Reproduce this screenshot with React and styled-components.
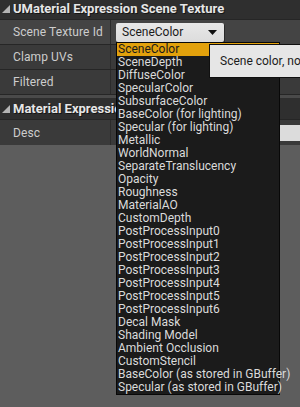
import React from 'react';
import styled, { createGlobalStyle } from 'styled-components';

const GlobalStyle = createGlobalStyle`
    html, body {
        margin: 0;
        padding: 0;
        background: #5d5d5d;
        overflow: hidden;
    }
    body {
        width: 300px;
        height: 407px;
        font-family: Roboto, "Liberation Sans", sans-serif;
    }
`;

const Panel = styled.div`
    display: flex;
    flex-direction: column;
    gap: 1px;
    background: #262626;
    margin-top: -2px;
`;

const Category = styled.div`
    height: 21px;
    display: flex;
    align-items: center;
    gap: 3px;
    padding-left: 2px;
    background: #2f2f2f;
    color: #e6e6e6;
    font-size: 13px;
    font-weight: bold;
    white-space: nowrap;
    text-shadow: 1px 1px 0 #151515;
    margin-top: ${({ spaced }) => (spaced ? '3px' : '0')};
    box-shadow: ${({ spaced }) => (spaced ? '0 -3px 0 #4a4a4a' : 'none')};
`;

const Row = styled.div`
    display: flex;
    height: ${({ tall }) => (tall ? '25px' : '24px')};
    background: ${({ hovered }) => (hovered ? '#444444' : '#3a3a3a')};
`;

const Label = styled.div`
    width: 111px;
    flex: none;
    display: flex;
    align-items: center;
    padding-left: 13px;
    box-sizing: border-box;
    color: #cdcdcd;
    font-size: 12px;
    letter-spacing: 0.1px;
    border-right: 1px solid #2b2b2b;
`;

const Value = styled.div`
    flex: 1;
    display: flex;
    align-items: center;
    padding-left: 5px;
    position: relative;
`;

const Combo = styled.div`
    position: relative;
    width: 108px;
    height: 19px;
    box-sizing: border-box;
    display: flex;
    align-items: center;
    justify-content: space-between;
    padding: 0 7px 0 6px;
    background: linear-gradient(#e8e8e8, #dcdcdc);
    border-radius: 2px;
    color: #1a1a1a;
    font-size: 12px;
    box-shadow: 1px 1px 0 #2a2a2a;
`;

const TextBox = styled.div`
    flex: 1;
    height: 16px;
    background: #dcdcdc;
    border-radius: 2px 0 0 2px;
`;

const Menu = styled.ul`
    position: absolute;
    top: 19px;
    left: 0;
    width: 164px;
    margin: 0;
    padding: 0;
    list-style: none;
    background: #1b1b1b;
    border: 1px solid #080808;
    box-sizing: border-box;
    z-index: 2;
`;

const Item = styled.li`
    height: 13px;
    line-height: 13px;
    padding-left: 1px;
    font-size: 12px;
    white-space: nowrap;
    color: ${({ selected }) => (selected ? '#1a1a1a' : '#dadada')};
    background: ${({ selected }) => (selected ? '#e2a10c' : 'transparent')};
`;

const Tooltip = styled.div`
    position: absolute;
    top: 1px;
    left: 92px;
    height: 34px;
    box-sizing: border-box;
    display: flex;
    align-items: center;
    padding: 0 10px;
    background: #e6e6e6;
    border: 1px solid #101010;
    color: #1c1c1c;
    font-size: 12px;
    white-space: nowrap;
    z-index: 3;
`;

const Arrow = () => (
    <svg width="8" height="8" viewBox="0 0 6 6">
        <polygon points="6,0 6,6 0,6" fill="#b4b4b4" />
    </svg>
);

const ComboArrow = () => (
    <svg width="9" height="5" viewBox="0 0 9 5">
        <polygon points="0,0 9,0 4.5,5" fill="#111" />
    </svg>
);

const options = [
    'SceneColor', 'SceneDepth', 'DiffuseColor', 'SpecularColor', 'SubsurfaceColor',
    'BaseColor (for lighting)', 'Specular (for lighting)', 'Metallic', 'WorldNormal',
    'SeparateTranslucency', 'Opacity', 'Roughness', 'MaterialAO', 'CustomDepth',
    'PostProcessInput0', 'PostProcessInput1', 'PostProcessInput2', 'PostProcessInput3',
    'PostProcessInput4', 'PostProcessInput5', 'PostProcessInput6', 'Decal Mask',
    'Shading Model', 'Ambient Occlusion', 'CustomStencil',
    'BaseColor (as stored in GBuffer)', 'Specular (as stored in GBuffer)',
];

const App = () => {
    const selected = 'SceneColor';

    return (
        <>
            <GlobalStyle />
            <Panel>
                <Category><Arrow />UMaterial Expression Scene Texture</Category>
                <Row hovered>
                    <Label>Scene Texture Id</Label>
                    <Value>
                        <Combo>
                            {selected}
                            <ComboArrow />
                            <Menu>
                                {options.map((o) => (
                                    <Item key={o} selected={o === selected}>{o}</Item>
                                ))}
                                <Tooltip>Scene color, normal post process passes should use PostProcessInput0</Tooltip>
                            </Menu>
                        </Combo>
                    </Value>
                </Row>
                <Row>
                    <Label>Clamp UVs</Label>
                    <Value />
                </Row>
                <Row>
                    <Label>Filtered</Label>
                    <Value />
                </Row>
                <Category spaced><Arrow />Material Expression</Category>
                <Row tall>
                    <Label>Desc</Label>
                    <Value>
                        <TextBox />
                    </Value>
                </Row>
            </Panel>
        </>
    );
};

export default App;
